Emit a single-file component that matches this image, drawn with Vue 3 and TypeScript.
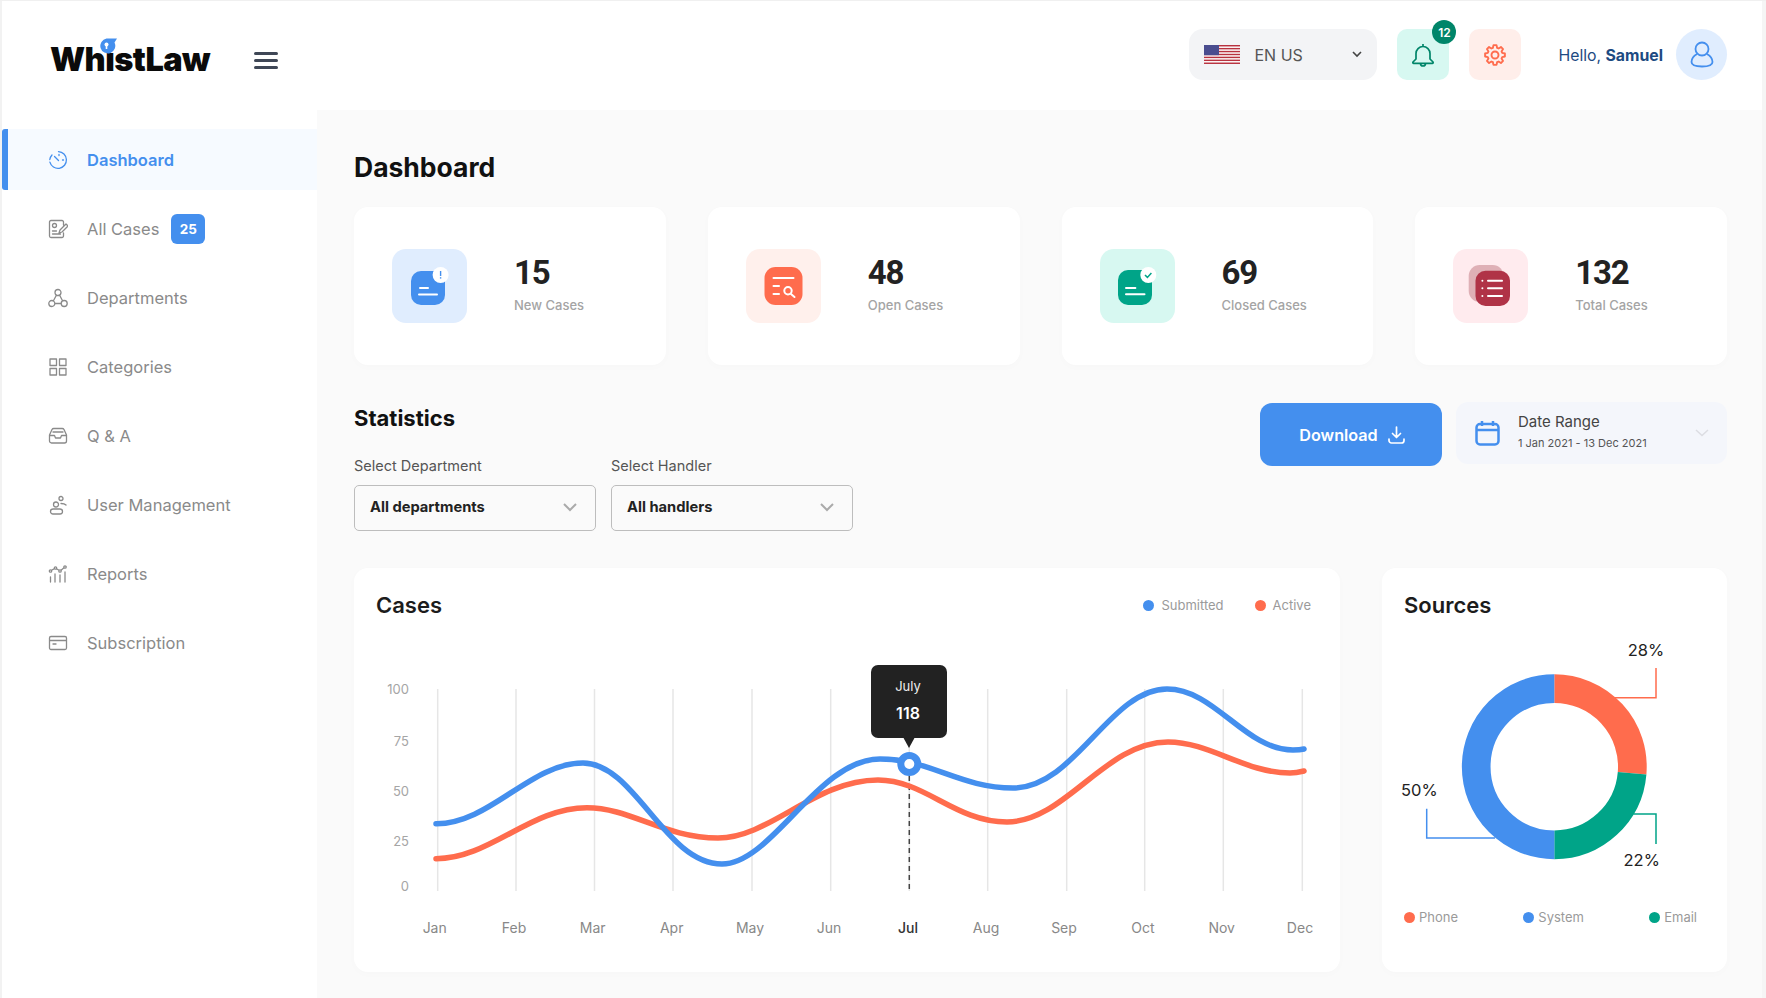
<template>
  <div class="app">
    <aside class="sidebar">
      <div class="brand">
        <div class="logo">
          WhistLaw
          <svg class="logo-mark" width="19" height="16" viewBox="0 0 19 16">
            <path d="M7.5 0.5h10.5l-2.5 4a7.5 7.5 0 1 1-8-4z" fill="#448fee" />
            <circle cx="7.5" cy="6.5" r="2" fill="#fff" />
            <rect x="6.7" y="7" width="1.6" height="4" fill="#fff" />
          </svg>
        </div>
        <button class="burger" aria-label="Menu"><span></span><span></span><span></span></button>
      </div>
      <nav class="nav">
        <a v-for="item in navItems" :key="item.label" class="nav-item" :class="{ active: item.active }">
          <svg class="nav-icon" width="20" height="20" viewBox="0 0 20 20"><path :d="item.icon" /></svg>
          <span>{{ item.label }}</span>
          <span v-if="item.badge" class="nav-badge">{{ item.badge }}</span>
        </a>
      </nav>
    </aside>

    <main class="main">
      <header class="topbar">
        <div class="lang">
          <svg width="36" height="19" viewBox="0 0 36 19">
            <rect width="36" height="19" fill="#fff" />
            <rect v-for="n in 7" :key="n" x="0" :y="(n - 1) * 2.92" width="36" height="1.46" fill="#b8323f" />
            <rect width="15" height="10.2" fill="#4a4d8f" />
          </svg>
          <span class="lang-text">EN US</span>
          <svg class="lang-chev" width="10" height="7" viewBox="0 0 10 7"><path d="M1 1l4 4 4-4" /></svg>
        </div>
        <button class="square bell" aria-label="Notifications">
          <svg width="24" height="24" viewBox="0 0 24 24">
            <path d="M12 1v2.5M5 16v-5.5a7 7 0 0 1 14 0V16l3 3a.8.8 0 0 1-.6 1.300H2.600A.8.8 0 0 1 2 19zM9.500 20.500a2.500 2.500 0 0 0 5 0" />
          </svg>
          <span class="bell-count">12</span>
        </button>
        <button class="square gear" aria-label="Settings">
          <svg width="22" height="22" viewBox="0 0 22 22">
            <path :d="gearPath" />
            <circle cx="11" cy="11" r="3.5" />
          </svg>
        </button>
        <div class="hello">Hello, <strong>Samuel</strong></div>
        <div class="avatar">
          <svg width="24" height="27" viewBox="0 0 24 27">
            <circle cx="12" cy="8" r="6.5" />
            <path d="M7 13C3.500 15 1.500 18 1.500 21c0 2.500 3 4.500 10.500 4.500s10.500-2 10.500-4.500c0-3-2-6-5.500-8" />
          </svg>
        </div>
      </header>

      <div class="content">
        <h1 class="page-title">Dashboard</h1>

        <section class="stat-cards">
          <div class="stat-card">
            <div class="stat-box tint-blue">
              <svg width="75" height="74" viewBox="0 0 75 74">
                <rect x="19" y="22" width="34" height="34" rx="10" fill="#448fee" />
                <rect x="27" y="38" width="10" height="2" rx="1" fill="#fff" />
                <rect x="26" y="44.5" width="20" height="2" rx="1" fill="#fff" />
                <circle cx="48.6" cy="26" r="8" fill="#fff" />
                <rect x="47.9" y="22" width="1.4" height="5" fill="#448fee" />
                <rect x="47.9" y="28.2" width="1.4" height="1.4" fill="#448fee" />
              </svg>
            </div>
            <div class="stat-text"><div class="stat-num">15</div><div class="stat-label">New Cases</div></div>
          </div>
          <div class="stat-card">
            <div class="stat-box tint-orange">
              <svg width="75" height="74" viewBox="0 0 75 74">
                <rect x="18.5" y="18" width="38" height="38" rx="11" fill="#ff6c4d" />
                <rect x="26.5" y="28" width="22" height="2" rx="1" fill="#fff" />
                <rect x="26.5" y="36" width="7.5" height="2" rx="1" fill="#fff" />
                <rect x="26.5" y="44" width="7.5" height="2" rx="1" fill="#fff" />
                <circle cx="42" cy="41.7" r="3.7" fill="none" stroke="#fff" stroke-width="2" />
                <path d="M45 45l3.5 3" stroke="#fff" stroke-width="2" stroke-linecap="round" />
              </svg>
            </div>
            <div class="stat-text"><div class="stat-num">48</div><div class="stat-label">Open Cases</div></div>
          </div>
          <div class="stat-card">
            <div class="stat-box tint-green">
              <svg width="75" height="74" viewBox="0 0 75 74">
                <rect x="18" y="21" width="34" height="35" rx="10" fill="#00a488" />
                <rect x="25" y="38" width="11.4" height="2" rx="1" fill="#fff" />
                <rect x="25" y="44.2" width="20.5" height="2" rx="1" fill="#fff" />
                <circle cx="48.3" cy="26" r="8" fill="#fff" />
                <path d="M45 26l2.400 2.400 4-4.400" fill="none" stroke="#00a488" stroke-width="1.5" />
              </svg>
            </div>
            <div class="stat-text"><div class="stat-num">69</div><div class="stat-label">Closed Cases</div></div>
          </div>
          <div class="stat-card">
            <div class="stat-box tint-red">
              <svg width="75" height="74" viewBox="0 0 75 74">
                <rect x="15.7" y="16" width="35" height="37" rx="11" fill="#dfb0b6" />
                <rect x="22.5" y="21.7" width="34.5" height="35.3" rx="10" fill="#b03347" />
                <g fill="#fff">
                  <rect x="34" y="30.8" width="16" height="2" rx="1" />
                  <rect x="34" y="38.3" width="16" height="2" rx="1" />
                  <rect x="34" y="46" width="16" height="2" rx="1" />
                  <circle cx="29.4" cy="31.8" r="1" />
                  <circle cx="29.4" cy="39.3" r="1" />
                  <circle cx="29.4" cy="47" r="1" />
                </g>
              </svg>
            </div>
            <div class="stat-text"><div class="stat-num">132</div><div class="stat-label">Total Cases</div></div>
          </div>
        </section>

        <section class="stats-bar">
          <div class="stats-left">
            <h2 class="section-title">Statistics</h2>
            <div class="filters">
              <div v-for="f in filters" :key="f.label" class="filter">
                <label class="filter-label">{{ f.label }}</label>
                <div class="select">
                  <span>{{ f.value }}</span>
                  <svg width="14" height="9" viewBox="0 0 14 9"><path d="M1 1l6 6 6-6" /></svg>
                </div>
              </div>
            </div>
          </div>
          <div class="stats-right">
            <button class="download">
              Download
              <svg width="17" height="18" viewBox="0 0 17 18">
                <path d="M8.5 1v10M4.500 7.500l4 4 4-4M1 13v1.500A2.500 2.500 0 0 0 3.500 17h10a2.500 2.500 0 0 0 2.500-2.500V13" />
              </svg>
            </button>
            <div class="date-range">
              <svg class="cal" width="25" height="26" viewBox="0 0 25 26">
                <rect x="1.5" y="4" width="22" height="20.5" rx="3.5" />
                <path d="M1.500 10h22M7 1v5M18 1v5" />
              </svg>
              <div class="date-text">
                <div class="date-title">Date Range</div>
                <div class="date-sub">1 Jan 2021 - 13 Dec 2021</div>
              </div>
              <svg class="date-chev" width="14" height="8" viewBox="0 0 14 8"><path d="M1 1l6 5.500L13 1" /></svg>
            </div>
          </div>
        </section>

        <section class="charts">
          <div class="panel">
            <div class="panel-head">
              <h3 class="panel-title">Cases</h3>
              <div class="legend-top">
                <span class="legend-item"><i class="dot" style="background: #448fee"></i>Submitted</span>
                <span class="legend-item"><i class="dot" style="background: #ff6c4d"></i>Active</span>
              </div>
            </div>
            <svg class="plot" width="986" height="332" viewBox="354 640 986 332">
              <line v-for="x in gridX" :key="x" :x1="x" :x2="x" y1="689" y2="891" stroke="#e6e6e6" stroke-width="1.5" />
              <text v-for="t in yTicks" :key="t.label" x="409" :y="t.y" text-anchor="end" dominant-baseline="central" class="tick">{{ t.label }}</text>
              <text
                v-for="m in months"
                :key="m.label"
                :x="m.x"
                y="927"
                text-anchor="middle"
                dominant-baseline="central"
                class="month"
                :class="{ current: m.label === 'Jul' }"
              >{{ m.label }}</text>
              <line x1="909.3" x2="909.3" y1="776" y2="891" stroke="#444" stroke-width="1.5" stroke-dasharray="5 4" />
              <path :d="activePath" class="curve" stroke="#ff6c4d" />
              <path :d="submittedPath" class="curve" stroke="#448fee" />
              <circle cx="909.3" cy="764" r="8.5" fill="#fff" stroke="#448fee" stroke-width="7" />
              <rect x="871" y="665" width="76" height="73" rx="7" fill="#222" />
              <path d="M903 737h12l-6 11z" fill="#222" />
              <text x="908" y="686" text-anchor="middle" dominant-baseline="central" class="tip-month">July</text>
              <text x="908" y="713" text-anchor="middle" dominant-baseline="central" class="tip-value">118</text>
            </svg>
          </div>

          <div class="panel">
            <div class="panel-head"><h3 class="panel-title">Sources</h3></div>
            <svg class="plot" width="345" height="240" viewBox="1382 640 345 240">
              <g fill="none" stroke-width="28.7">
                <path d="M1554.3 688.6A78.1 78.1 0 0 1 1632.1 773.2" stroke="#ff6c4d" />
                <path d="M1632.1 773.2A78.1 78.1 0 0 1 1554.3 844.8" stroke="#00a488" />
                <path d="M1554.3 844.8A78.1 78.1 0 0 1 1554.3 688.6" stroke="#448fee" />
              </g>
              <g fill="none" stroke-width="1.5">
                <path d="M1615 697.7h41V668" stroke="#ff6c4d" />
                <path d="M1633.3 814H1656v30" stroke="#00a488" />
                <path d="M1495 838h-68.3v-29.3" stroke="#448fee" />
              </g>
              <text x="1646" y="650" class="pct">28%</text>
              <text x="1419.3" y="790" class="pct">50%</text>
              <text x="1641.7" y="860" class="pct">22%</text>
            </svg>
            <div class="legend-bottom">
              <span class="legend-item"><i class="dot" style="background: #ff6c4d"></i>Phone</span>
              <span class="legend-item"><i class="dot" style="background: #448fee"></i>System</span>
              <span class="legend-item"><i class="dot" style="background: #00a488"></i>Email</span>
            </div>
          </div>
        </section>
      </div>
    </main>
  </div>
</template>

<script setup lang="ts">
interface NavItem {
  label: string
  icon: string
  active?: boolean
  badge?: number
}

const circle = (cx: number, cy: number, r: number) =>
  `M${cx - r} ${cy}a${r} ${r} 0 1 0 ${2 * r} 0a${r} ${r} 0 1 0 ${-2 * r} 0`

const navItems: NavItem[] = [
  {
    label: 'Dashboard',
    active: true,
    icon: 'M10.5 1.6a8.4 8.4 0 1 1-8.6 10.6M1.8 9.5A8.4 8.4 0 0 1 4 5M6.5 6.5l4 4M11 4.5v1M15.5 10h-1',
  },
  {
    label: 'All Cases',
    badge: 25,
    icon: `M15.5 6V3A1.5 1.5 0 0 0 14 1.5H3A1.5 1.5 0 0 0 1.5 3v14A1.5 1.5 0 0 0 3 18.5h11a1.5 1.5 0 0 0 1.5-1.5v-3${circle(6.5, 6.5, 2)}M4.5 12h4M4.5 15h8M11 14l1-3 6-6 2 2-6 6z`,
  },
  {
    label: 'Departments',
    icon: `${circle(10, 4.5, 3)}${circle(3.8, 15.5, 3)}${circle(16.2, 15.5, 3)}M8.5 7 5.3 13M11.5 7l3.2 6M6.8 15.5h6.4`,
  },
  { label: 'Categories', icon: 'M2 2h6.5v6.5H2zM11.5 2H18v6.5h-6.5zM2 11.5h6.5V18H2zM11.5 11.5H18V18h-6.5z' },
  {
    label: 'Q & A',
    icon: 'M1.5 9 4 3.5A2 2 0 0 1 5.8 2.5h8.4A2 2 0 0 1 16 3.5L18.5 9v6a2 2 0 0 1-2 2h-13a2 2 0 0 1-2-2zM1.5 9.5h5l1 2.5h5l1-2.5h5M5 6h10',
  },
  {
    label: 'User Management',
    icon: `${circle(13, 3.5, 2)}${circle(8, 9.5, 2.5)}M5 14h7a2.500 2.500 0 0 1 0 5H5a2.500 2.500 0 0 1 0-5zM13 8.500c2 0 4 .5 5 1.500`,
  },
  {
    label: 'Reports',
    icon: `${circle(2.5, 7, 1.2)}${circle(7.5, 4, 1.2)}${circle(12, 7, 1.2)}${circle(17, 3, 1.2)}M3.5 6.3l3-1.7M8.5 4.7l2.5 1.6M13 6.2l3-2.4M2.5 13v5M7 10v8M12 11v7M17 8v10`,
  },
  {
    label: 'Subscription',
    icon: 'M3 3.5h14A1.5 1.5 0 0 1 18.5 5v10a1.5 1.5 0 0 1-1.5 1.5H3A1.5 1.5 0 0 1 1.5 15V5A1.5 1.5 0 0 1 3 3.5zM1.5 7.5h17M5 11h3',
  },
]

const filters = [
  { label: 'Select Department', value: 'All departments' },
  { label: 'Select Handler', value: 'All handlers' },
]

const gridX = [437.7, 516, 594.5, 673, 752, 830.7, 909.3, 987.7, 1066.7, 1144.7, 1223.3, 1302.3]

const yTicks = [
  { label: '100', y: 689 },
  { label: '75', y: 741 },
  { label: '50', y: 791 },
  { label: '25', y: 841 },
  { label: '0', y: 886 },
]

const months = [
  { label: 'Jan', x: 434.7 },
  { label: 'Feb', x: 514 },
  { label: 'Mar', x: 592.7 },
  { label: 'Apr', x: 671.7 },
  { label: 'May', x: 750 },
  { label: 'Jun', x: 829 },
  { label: 'Jul', x: 908 },
  { label: 'Aug', x: 986 },
  { label: 'Sep', x: 1064 },
  { label: 'Oct', x: 1143 },
  { label: 'Nov', x: 1221.7 },
  { label: 'Dec', x: 1300 },
]

const submittedPath =
  'M436 823.7C490 824 530 763 583 763C635 763 665 864 722 864C772 864 818 759 880 759C930 759 960 788 1013 788C1075 788 1110 689 1167 689C1215 689 1245 750 1293 750C1297 750 1300 750 1304 749'

const activePath =
  'M436 858.7C490 858.7 530 807.7 587 807.7C630 807.7 665 838 718 838C770 838 815 780 878 780C925 780 955 822 1007 822C1065 822 1105 742 1168 742C1210 742 1245 773 1290 773C1295 773 1300 772 1304 771'

function buildGear(teeth: number, outer: number, inner: number): string {
  const pts: string[] = []
  const step = (Math.PI * 2) / teeth
  for (let i = 0; i < teeth; i++) {
    const a = i * step - Math.PI / 2
    const offsets: [number, number][] = [
      [-0.3, inner],
      [-0.16, outer],
      [0.16, outer],
      [0.3, inner],
    ]
    for (const [o, r] of offsets) {
      const x = 11 + r * Math.cos(a + o * step * 1.2)
      const y = 11 + r * Math.sin(a + o * step * 1.2)
      pts.push(`${x.toFixed(2)} ${y.toFixed(2)}`)
    }
  }
  return `M${pts.join('L')}z`
}

const gearPath = buildGear(8, 10, 7.5)
</script>

<style>
html,
body {
  margin: 0;
  background: #fafafa;
}
</style>

<style scoped>
* {
  box-sizing: border-box;
}

.app {
  display: flex;
  width: 1766px;
  height: 998px;
  overflow: hidden;
  font-family: Inter, "Noto Sans", sans-serif;
  color: #222;
  background: #fafafa;
  border-top: 1px solid #f0f0f0;
}

.sidebar {
  width: 317px;
  flex-shrink: 0;
  background: #fff;
  border-left: 2px solid #f2f2f2;
}

.brand {
  display: flex;
  align-items: center;
  height: 128px;
  padding: 0 0 10px 48px;
}

.logo {
  position: relative;
  font-size: 32.5px;
  font-weight: 900;
  letter-spacing: -0.55px;
  color: #0a0a0a;
  line-height: 40px;
}

.logo-mark {
  position: absolute;
  left: 49px;
  top: -2px;
}

.burger {
  display: flex;
  flex-direction: column;
  gap: 4px;
  width: 24px;
  margin-left: auto;
  margin-right: 39px;
  padding: 0;
  background: none;
  border: none;
}

.burger span {
  height: 3px;
  border-radius: 2px;
  background: #3f4756;
}

.nav {
  display: flex;
  flex-direction: column;
  gap: 8px;
}

.nav-item {
  display: flex;
  align-items: center;
  height: 61px;
  padding-left: 46px;
  font-size: 16.5px;
  color: #8a8a8a;
}

.nav-item.active {
  padding-left: 40px;
  font-weight: 600;
  color: #448fee;
  background: #f6faff;
  border-left: 6px solid #448fee;
  border-radius: 3px 0 0 3px;
}

.nav-icon {
  margin-right: 19px;
  fill: none;
  stroke: #8a8a8a;
  stroke-width: 1.3;
  stroke-linecap: round;
  stroke-linejoin: round;
}

.active .nav-icon {
  stroke: #448fee;
}

.nav-badge {
  display: flex;
  align-items: center;
  justify-content: center;
  width: 34px;
  height: 30px;
  margin-left: 12px;
  font-size: 13.5px;
  font-weight: 700;
  color: #fff;
  background: #448fee;
  border-radius: 6px;
}

.main {
  flex: 1;
  min-width: 0;
  border-right: 4px solid #f5f5f5;
}

.topbar {
  display: flex;
  align-items: center;
  justify-content: flex-end;
  height: 109px;
  padding: 0 35px 2px 0;
  background: #fff;
}

.lang {
  display: flex;
  align-items: center;
  width: 188px;
  height: 51px;
  padding: 0 15px;
  background: #f3f4f6;
  border-radius: 14px;
}

.lang-text {
  margin-left: 14px;
  font-size: 16px;
  color: #555;
}

.lang-chev {
  margin-left: auto;
  fill: none;
  stroke: #444;
  stroke-width: 1.6;
}

.square {
  position: relative;
  display: flex;
  align-items: center;
  justify-content: center;
  width: 52px;
  height: 51px;
  padding: 0;
  border: none;
  border-radius: 10px;
}

.bell {
  margin-left: 20px;
  background: #d7f8f1;
}

.bell svg {
  fill: none;
  stroke: #008569;
  stroke-width: 1.7;
}

.bell-count {
  position: absolute;
  top: -9px;
  right: -7px;
  display: flex;
  align-items: center;
  justify-content: center;
  width: 24px;
  height: 24px;
  font-family: Inter, sans-serif;
  font-size: 12px;
  font-weight: 600;
  color: #fff;
  background: #008569;
  border-radius: 50%;
}

.gear {
  margin-left: 20px;
  background: #ffeeea;
}

.gear svg {
  fill: none;
  stroke: #ff6c4d;
  stroke-width: 1.9;
  stroke-linejoin: round;
}

.hello {
  margin-left: 37px;
  padding-top: 2px;
  font-size: 15.8px;
  color: #1d4a82;
}

.hello strong {
  font-weight: 700;
}

.avatar {
  display: flex;
  align-items: center;
  justify-content: center;
  width: 51px;
  height: 51px;
  margin-left: 13px;
  background: #e0edfe;
  border-radius: 50%;
}

.avatar svg {
  fill: none;
  stroke: #448fee;
  stroke-width: 1.8;
}

.content {
  padding: 40px 35px 0 37px;
}

.page-title {
  margin: 0 0 23px;
  font-size: 26.5px;
  font-weight: 700;
  line-height: 34px;
  color: #111;
}

.stat-cards {
  display: grid;
  grid-template-columns: repeat(4, 1fr);
  gap: 42px;
}

.stat-card {
  display: flex;
  align-items: center;
  height: 158px;
  padding-left: 38px;
  background: #fff;
  border-radius: 14px;
  box-shadow: 0 2px 10px rgba(0, 0, 0, 0.015);
}

.stat-box {
  width: 75px;
  height: 74px;
  border-radius: 14px;
}

.stat-box svg {
  display: block;
}

.tint-blue {
  background: #e0edfe;
}

.tint-orange {
  background: #fff0ec;
}

.tint-green {
  background: #d7f8f1;
}

.tint-red {
  background: #ffebee;
}

.stat-text {
  margin-left: 47px;
  padding-bottom: 3px;
}

.stat-num {
  font-family: Roboto, Inter, sans-serif;
  font-size: 33px;
  font-weight: 700;
  letter-spacing: -1.2px;
  line-height: 36px;
  color: #222;
}

.stat-label {
  margin-top: 5px;
  font-size: 13px;
  font-weight: 500;
  line-height: 18px;
  color: #a4a4a4;
}

.stats-bar {
  display: flex;
  justify-content: space-between;
  margin-top: 37px;
}

.section-title {
  margin: 2px 0 0;
  font-size: 22px;
  font-weight: 700;
  line-height: 28px;
  color: #111;
}

.filters {
  display: flex;
  gap: 15px;
  margin-top: 25px;
}

.filter-label {
  display: block;
  margin-bottom: 10px;
  font-size: 14.5px;
  line-height: 18px;
  color: #555;
}

.select {
  display: flex;
  align-items: center;
  justify-content: space-between;
  width: 242px;
  height: 46px;
  padding: 0 18px 2px 15px;
  font-size: 14.7px;
  font-weight: 700;
  color: #222;
  border: 1.5px solid #bdbdbd;
  border-radius: 5px;
}

.select svg {
  fill: none;
  stroke: #aaa;
  stroke-width: 2;
}

.stats-right {
  display: flex;
  align-items: flex-start;
  gap: 14px;
}

.download {
  display: flex;
  align-items: center;
  justify-content: center;
  gap: 10px;
  width: 182px;
  height: 63px;
  margin-top: 1px;
  padding-right: 4px;
  font-family: inherit;
  font-size: 16.2px;
  font-weight: 600;
  color: #fff;
  background: #448fee;
  border: none;
  border-radius: 12px;
}

.download svg {
  fill: none;
  stroke: #fff;
  stroke-width: 1.7;
  stroke-linecap: round;
  stroke-linejoin: round;
}

.date-range {
  display: flex;
  align-items: center;
  width: 271px;
  height: 62px;
  padding: 0 18px 0 19px;
  background: #f4f6fb;
  border-radius: 12px;
}

.cal {
  fill: none;
  stroke: #448fee;
  stroke-width: 2.5;
}

.date-text {
  margin-left: 18px;
  padding-bottom: 3px;
}

.date-title {
  font-size: 15px;
  line-height: 20px;
  color: #444;
}

.date-sub {
  margin-top: 3px;
  font-size: 11px;
  line-height: 16px;
  color: #555;
}

.date-chev {
  margin-left: auto;
  fill: none;
  stroke: #dcdde2;
  stroke-width: 1.5;
}

.charts {
  display: grid;
  grid-template-columns: 1fr 345px;
  gap: 42px;
  margin-top: 37px;
}

.panel {
  height: 404px;
  background: #fff;
  border-radius: 14px;
  box-shadow: 0 2px 10px rgba(0, 0, 0, 0.015);
}

.panel-head {
  display: flex;
  justify-content: space-between;
  height: 72px;
  padding: 23px 29px 0 22px;
}

.panel-title {
  margin: 0;
  font-size: 22px;
  font-weight: 600;
  line-height: 28px;
  color: #1c1c1c;
}

.legend-top {
  display: flex;
  gap: 31px;
  height: 28px;
  align-items: center;
}

.legend-item {
  display: flex;
  align-items: center;
  gap: 7px;
  font-size: 13px;
  line-height: 18px;
  color: #9a9a9a;
}

.dot {
  width: 11px;
  height: 11px;
  border-radius: 50%;
}

.plot {
  display: block;
}

.tick {
  font-size: 13px;
  fill: #a5a5a5;
}

.month {
  font-size: 14px;
  fill: #888;
}

.month.current {
  font-weight: 500;
  fill: #333;
}

.curve {
  fill: none;
  stroke-width: 5.5;
  stroke-linecap: round;
}

.tip-month {
  font-size: 13px;
  fill: #eee;
}

.tip-value {
  font-size: 16px;
  font-weight: 600;
  fill: #fff;
}

.pct {
  font-size: 16.5px;
  fill: #222;
  text-anchor: middle;
  dominant-baseline: central;
}

.legend-bottom {
  display: flex;
  justify-content: space-between;
  margin-top: 28px;
  padding: 0 30px 0 22px;
}

.legend-bottom .legend-item {
  gap: 4px;
}
</style>
